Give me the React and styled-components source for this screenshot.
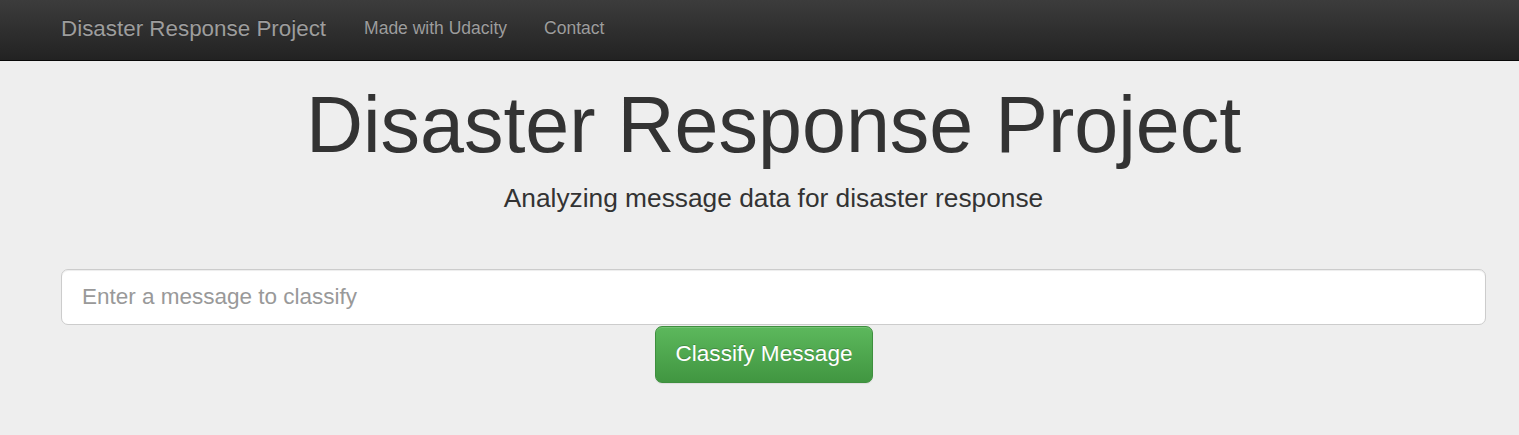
import React from "react";
import styled, { createGlobalStyle } from "styled-components";

const GlobalStyle = createGlobalStyle`
  html, body {
    margin: 0;
    padding: 0;
    background: #eeeeee;
    font-family: "Liberation Sans", Arial, Helvetica, sans-serif;
  }
  * { box-sizing: border-box; }
`;

const Navbar = styled.nav`
  height: 61px;
  background: linear-gradient(to bottom, #3c3c3c 0, #222222 100%);
  border-bottom: 1px solid #080808;
  display: flex;
  align-items: center;
  padding-left: 61px;
  padding-bottom: 3px;
`;

const Brand = styled.a`
  color: #9d9d9d;
  font-size: 22.4px;
  text-decoration: none;
  margin-right: 38px;
  text-shadow: 0 -1px 0 rgba(0, 0, 0, 0.25);
`;

const NavLink = styled.a`
  color: #9d9d9d;
  font-size: 17.5px;
  text-decoration: none;
  margin-right: 37px;
  text-shadow: 0 -1px 0 rgba(0, 0, 0, 0.25);
`;

const Jumbotron = styled.section`
  background: #eeeeee;
  height: 374px;
`;

const Container = styled.div`
  margin-left: 61px;
  width: 1425px;
  padding-top: 22px;
`;

const Title = styled.h1`
  margin: 0;
  text-align: center;
  font-size: 79px;
  font-weight: 400;
  line-height: 83.6px;
  color: #333333;
`;

const Lead = styled.p`
  margin: 13px 0 0;
  text-align: center;
  font-size: 26.3px;
  line-height: 36px;
  color: #333333;
`;

const Form = styled.form`
  margin-top: 53px;
`;

const Input = styled.input`
  display: block;
  width: 100%;
  height: 56px;
  padding: 0 20px;
  font-family: inherit;
  font-size: 22.5px;
  color: #555555;
  background: #ffffff;
  border: 1px solid #cccccc;
  border-radius: 7px;
  box-shadow: inset 0 1px 1px rgba(0, 0, 0, 0.075);
  outline: none;
  &::placeholder { color: #999999; }
`;

const ButtonRow = styled.div`
  padding-left: 594px;
  margin-top: 1px;
`;

const Button = styled.button`
  width: 218px;
  height: 57px;
  padding: 0;
  font-family: inherit;
  font-size: 22.6px;
  color: #ffffff;
  background: linear-gradient(to bottom, #5cb85c 0, #419641 100%);
  border: 1px solid #3e8f3e;
  border-radius: 7px;
  text-shadow: 0 -1px 0 rgba(0, 0, 0, 0.2);
  box-shadow: inset 0 1px 0 rgba(255, 255, 255, 0.15), 0 1px 1px rgba(0, 0, 0, 0.075);
  cursor: pointer;
`;

export default function App() {
  return (
    <>
      <GlobalStyle />
      <Navbar>
        <Brand href="#">Disaster Response Project</Brand>
        <NavLink href="#">Made with Udacity</NavLink>
        <NavLink href="#">Contact</NavLink>
      </Navbar>
      <Jumbotron>
        <Container>
          <Title>Disaster Response Project</Title>
          <Lead>Analyzing message data for disaster response</Lead>
          <Form onSubmit={(e) => e.preventDefault()}>
            <Input type="text" placeholder="Enter a message to classify" />
            <ButtonRow>
              <Button type="submit">Classify Message</Button>
            </ButtonRow>
          </Form>
        </Container>
      </Jumbotron>
    </>
  );
}
